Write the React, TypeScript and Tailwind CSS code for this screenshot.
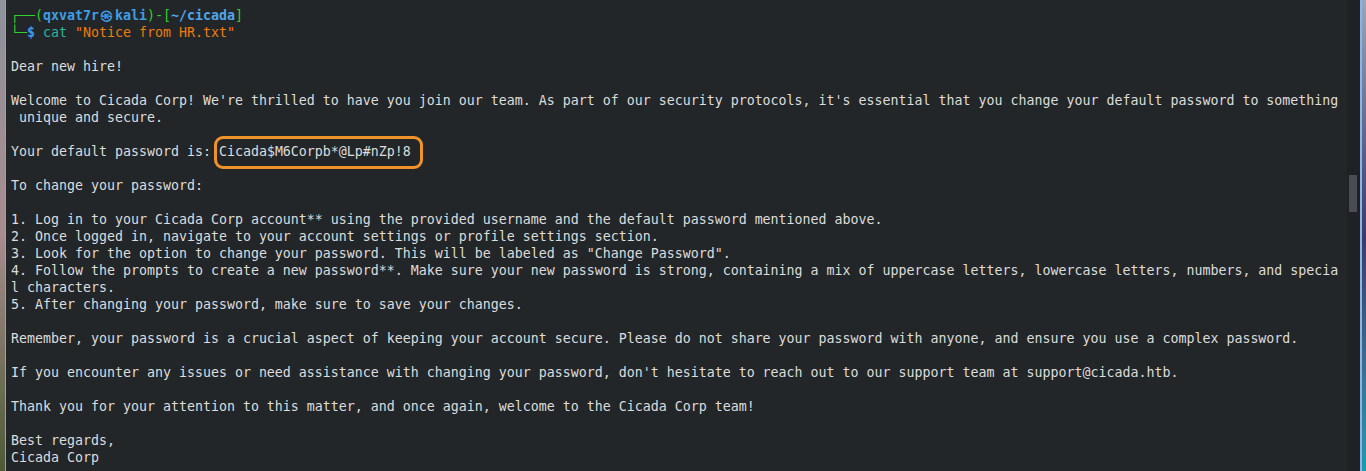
import React from "react";

// 터미널 본문 (원본 줄바꿈 그대로)
const lines: string[] = [
  "",
  "Dear new hire!",
  "",
  "Welcome to Cicada Corp! We're thrilled to have you join our team. As part of our security protocols, it's essential that you change your default password to something",
  " unique and secure.",
  "",
  "__PASSWORD__",
  "",
  "To change your password:",
  "",
  "1. Log in to your Cicada Corp account** using the provided username and the default password mentioned above.",
  "2. Once logged in, navigate to your account settings or profile settings section.",
  "3. Look for the option to change your password. This will be labeled as \"Change Password\".",
  "4. Follow the prompts to create a new password**. Make sure your new password is strong, containing a mix of uppercase letters, lowercase letters, numbers, and specia",
  "l characters.",
  "5. After changing your password, make sure to save your changes.",
  "",
  "Remember, your password is a crucial aspect of keeping your account secure. Please do not share your password with anyone, and ensure you use a complex password.",
  "",
  "If you encounter any issues or need assistance with changing your password, don't hesitate to reach out to our support team at support@cicada.htb.",
  "",
  "Thank you for your attention to this matter, and once again, welcome to the Cicada Corp team!",
  "",
  "Best regards,",
  "Cicada Corp",
];

function Line({ children }: { children?: React.ReactNode }) {
  return <div className="h-[17px] leading-[17px] whitespace-pre">{children}</div>;
}

export default function App() {
  return (
    <div className="flex h-[471px] w-[1366px] overflow-hidden bg-[#232629]">
      {/* 왼쪽 배경화면 조각 */}
      <div className="w-[5px] bg-linear-to-b from-[#8d929c] via-[#a88c8e] to-[#4d5a34]" />
      <div className="w-px bg-[#7ea6d6]" />

      {/* 터미널 */}
      <div
        className="flex-1 overflow-hidden pl-[5px] pt-[7px] text-[13.29px] text-[#dcdcdc]"
        style={{ fontFamily: '"DejaVu Sans Mono", "Liberation Mono", monospace' }}
      >
        <Line>
          <span className="text-[#2fd12f]">┌──(</span>
          <span className="font-bold text-[#3d9ee6]">qxvat7r</span>
          <span className="inline-block w-[16px] text-center font-bold text-[#3d9ee6]">㉿</span>
          <span className="font-bold text-[#3d9ee6]">kali</span>
          <span className="text-[#2fd12f]">)-[</span>
          <span className="font-bold text-[#4ea6ea]">~/cicada</span>
          <span className="text-[#2fd12f]">]</span>
        </Line>
        <Line>
          <span className="text-[#2fd12f]">└─</span>
          <span className="font-bold text-[#3d9ee6]">$</span>{" "}
          <span className="text-[#27b59c]">cat</span>{" "}
          <span className="text-[#ec7d0e]">"Notice from HR.txt"</span>
        </Line>
        {lines.map((l, i) =>
          l === "__PASSWORD__" ? (
            <Line key={i}>
              Your default password is:{" "}
              <span className="relative">
                Cicada$M6Corpb*@Lp#nZp!8
                {/* 주황 강조 박스 */}
                <span className="pointer-events-none absolute -top-[8px] -bottom-[10px] -left-[5px] -right-[12px] rounded-[9px] border-[3px] border-[#f0922a]" />
              </span>
            </Line>
          ) : (
            <Line key={i}>{l}</Line>
          )
        )}
      </div>

      {/* 스크롤바 */}
      <div className="w-[13px] bg-[#1f2124] pt-[175px]">
        <div className="ml-[2px] h-[37px] w-[8px] bg-[#4a4d52]" />
      </div>

      {/* 오른쪽 배경화면 조각 */}
      <div className="w-[2px] bg-[#8ab4e6]" />
      <div className="w-[4px] bg-linear-to-b from-[#9aa6bc] via-[#3b3a6a] to-[#1a9ab0]" />
    </div>
  );
}
